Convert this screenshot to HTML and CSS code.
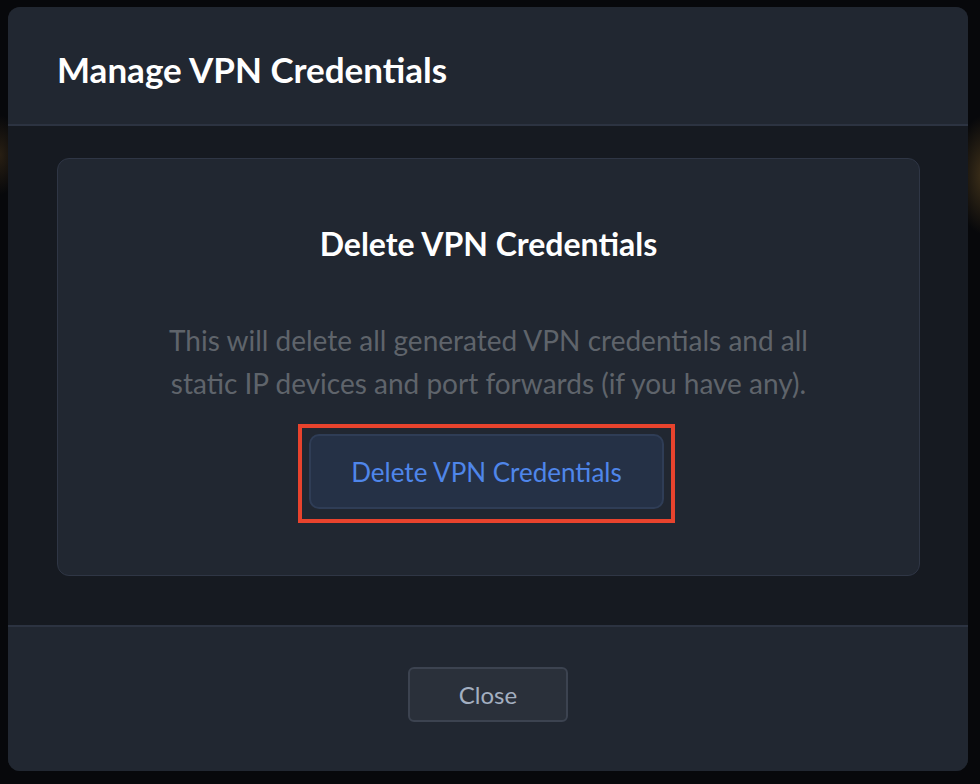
FILE: index.html
```html
<!DOCTYPE html>
<html lang="en">
<head>
<meta charset="utf-8">
<title>Manage VPN Credentials</title>
<link rel="stylesheet" href="styles.css">
</head>
<body>
<div class="modal">
  <header class="modal-header">
    <h1 class="modal-title">Manage VPN Credentials</h1>
  </header>
  <main class="modal-body">
    <section class="card">
      <h2 class="card-title">Delete VPN Credentials</h2>
      <p class="card-text">This will delete all generated VPN credentials and all<br>static IP devices and port forwards (if you have any).</p>
      <div class="highlight">
        <button class="btn-delete" type="button">Delete VPN Credentials</button>
      </div>
    </section>
  </main>
  <footer class="modal-footer">
    <button class="btn-close" type="button">Close</button>
  </footer>
</div>
</body>
</html>
```

FILE: styles.css
```css
html, body {
  margin: 0;
  padding: 0;
  height: 100%;
}

body {
  background:
    radial-gradient(ellipse 30px 60px at 985px 175px, rgba(120, 90, 40, 0.5), rgba(120, 90, 40, 0) 100%),
    radial-gradient(ellipse 20px 40px at 0px 155px, rgba(90, 65, 30, 0.4), rgba(90, 65, 30, 0) 100%),
    #07080b;
  font-family: Lato, "Noto Sans", "DejaVu Sans", sans-serif;
  overflow: hidden;
}

.modal {
  margin: 7px 0 0 8px;
  width: 960px;
  height: 764px;
  border-radius: 12px;
  background: #161a21;
  display: flex;
  flex-direction: column;
  overflow: hidden;
}

.modal-header {
  background: #212731;
  height: 119px;
  box-sizing: border-box;
  border-bottom: 2px solid #2c3341;
  padding: 41px 49px 0;
  flex: none;
}

.modal-title {
  margin: 0;
  color: #ffffff;
  font-size: 35px;
  font-weight: 700;
  line-height: 42px;
}

.modal-body {
  padding: 32px 48px 49px 49px;
  flex: none;
}

.card {
  height: 418px;
  box-sizing: border-box;
  background: #212731;
  border: 1.5px solid #2f3645;
  border-radius: 12px;
  display: flex;
  flex-direction: column;
  align-items: center;
}

.card-title {
  margin: 66px 0 0;
  color: #ffffff;
  font-size: 32px;
  font-weight: 700;
  line-height: 38px;
}

.card-text {
  margin: 56px 0 0;
  color: #5f646b;
  font-size: 28px;
  line-height: 43px;
  text-align: center;
}

.highlight {
  margin: 19px 4px 0 0;
  border: 4px solid #e8432d;
  padding: 6px 7px 10px;
}

.btn-delete {
  display: block;
  width: 355px;
  height: 75px;
  background: #253146;
  border: 2px solid #2f3d56;
  border-radius: 10px;
  color: #4f86ea;
  font-family: Lato, "Noto Sans", sans-serif;
  font-size: 26px;
  padding: 0;
}

.modal-footer {
  flex: 1;
  background: #212731;
  border-top: 2px solid #2c3341;
  display: flex;
  justify-content: center;
  align-items: flex-start;
  padding-top: 40px;
}

.btn-close {
  width: 160px;
  height: 55px;
  background: #2a303a;
  border: 2px solid #3c4350;
  border-radius: 6px;
  color: #a3afc0;
  font-family: Lato, "Noto Sans", sans-serif;
  font-size: 24px;
  padding: 0;
}
```
